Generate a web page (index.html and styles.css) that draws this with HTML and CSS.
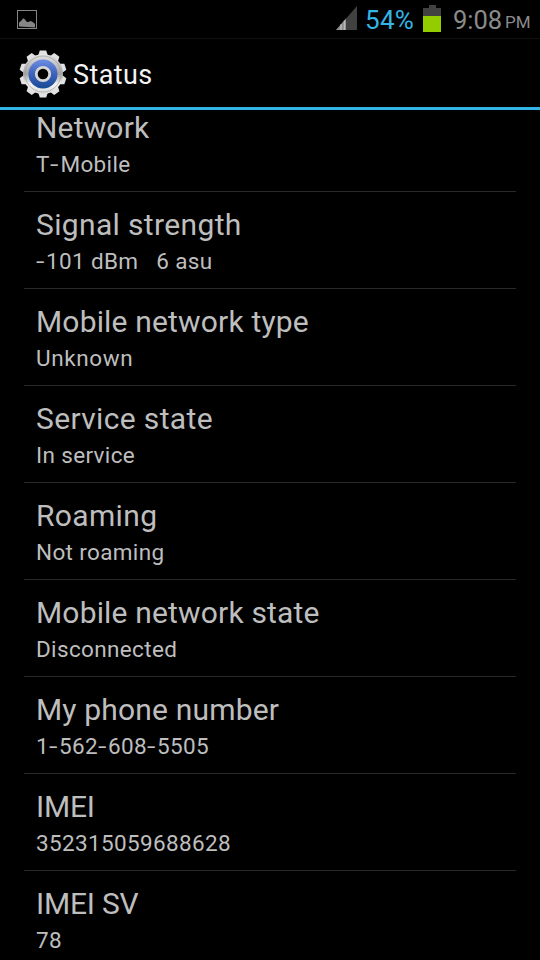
FILE: index.html
```html
<!DOCTYPE html>
<html lang="en">
<head>
    <meta charset="UTF-8">
    <meta name="viewport" content="width=device-width, initial-scale=1.0">
    <title>Status</title>
    <link rel="stylesheet" href="styles.css">
</head>
<body>
    <div class="screen">
        <div class="status-bar">
            <svg class="picture-icon" width="20" height="19" viewBox="0 0 20 19">
                <rect x="0.5" y="0.5" width="19" height="18" fill="none" stroke="#858585"/>
                <path d="M2 16.500v-4l2-1.500 2-2.500h1l3 3.500h1l3-1 3 2 1 1v3.500z" fill="#858585"/>
            </svg>
            <div class="indicators">
                <svg class="signal-icon" width="21" height="24" viewBox="0 0 21 24">
                    <path d="M0 24L21 0v24z" fill="#414141"/>
                    <path d="M0 24L10 12.500V24z" fill="#8d8d8d"/>
                    <path d="M5 18.300v5.700M8.500 14.500v9.500" stroke="#b9b9b9" stroke-width="1.500"/>
                </svg>
                <span class="percent">54%</span>
                <svg class="battery-icon" width="18" height="27" viewBox="0 0 18 27">
                    <path d="M6 0h7v3h5v8H0V3h6z" fill="#414141"/>
                    <rect y="11" width="18" height="16" fill="#93cd00"/>
                </svg>
                <span class="clock">9:08</span>
                <span class="ampm">PM</span>
            </div>
        </div>

        <div class="header">
            <svg class="gear-icon" width="48" height="48" viewBox="-24 -24 48 48">
                <defs>
                    <linearGradient id="metal" x1="0" y1="0" x2="0" y2="1">
                        <stop offset="0" stop-color="#e6e6e6"/>
                        <stop offset="0.5" stop-color="#a3a3a3"/>
                        <stop offset="0.75" stop-color="#f2f2f2"/>
                        <stop offset="1" stop-color="#dcdcdc"/>
                    </linearGradient>
                    <linearGradient id="blue" x1="0" y1="0" x2="0" y2="1">
                        <stop offset="0" stop-color="#6e8ee4"/>
                        <stop offset="0.5" stop-color="#3f62bc"/>
                        <stop offset="1" stop-color="#174a96"/>
                    </linearGradient>
                    <path id="tooth" d="M-5-18L-3.200-23.500H3.200L5-18z"/>
                </defs>
                <g fill="#e2e2e2">
                    <use href="#tooth"/>
                    <use href="#tooth" transform="rotate(36)"/>
                    <use href="#tooth" transform="rotate(72)"/>
                    <use href="#tooth" transform="rotate(108)"/>
                    <use href="#tooth" transform="rotate(144)"/>
                    <use href="#tooth" transform="rotate(180)"/>
                    <use href="#tooth" transform="rotate(216)"/>
                    <use href="#tooth" transform="rotate(252)"/>
                    <use href="#tooth" transform="rotate(288)"/>
                    <use href="#tooth" transform="rotate(324)"/>
                </g>
                <circle r="20" fill="url(#metal)"/>
                <circle r="18" fill="none" stroke="#a0a0a0" stroke-width="0.700"/>
                <circle r="14.500" fill="url(#blue)"/>
                <circle r="6.700" fill="#000" stroke="#d5d5d5" stroke-width="2.800"/>
            </svg>
            <h1>Status</h1>
        </div>

        <div class="list">
            <div class="item">
                <div class="title">Network</div>
                <div class="summary"><span class="wide-t">T</span><span class="dash">-</span>Mobile</div>
            </div>
            <div class="item">
                <div class="title loose">Signal strength</div>
                <div class="summary"><span class="dash">-</span>101 dBm   6 asu</div>
            </div>
            <div class="item">
                <div class="title">Mobile network type</div>
                <div class="summary loose">Unknown</div>
            </div>
            <div class="item">
                <div class="title loose">Service state</div>
                <div class="summary">In service</div>
            </div>
            <div class="item">
                <div class="title loose">Roaming</div>
                <div class="summary">Not roaming</div>
            </div>
            <div class="item">
                <div class="title">Mobile network state</div>
                <div class="summary">Disconnected</div>
            </div>
            <div class="item">
                <div class="title">My phone number</div>
                <div class="summary">1<span class="dash">-</span>562<span class="dash">-</span>608<span class="dash">-</span>5505</div>
            </div>
            <div class="item">
                <div class="title tight">IMEI</div>
                <div class="summary">352315059688628</div>
            </div>
            <div class="item">
                <div class="title tight">IMEI SV</div>
                <div class="summary">78</div>
            </div>
        </div>
    </div>
</body>
</html>
```

FILE: styles.css
```css
:root {
    --holo: #33b5e5;
    --text: #bebebe;
    --divider: #292929;
}

* {
    box-sizing: border-box;
    margin: 0;
    padding: 0;
}

body {
    font-family: Roboto, sans-serif;
    background: #000;
    color: var(--text);
}

svg {
    display: block;
    flex: none;
}

.screen {
    width: 540px;
    height: 960px;
    display: flex;
    flex-direction: column;
    overflow: hidden;
}

.status-bar {
    flex: none;
    height: 39px;
    display: flex;
    justify-content: space-between;
    align-items: flex-start;
    padding: 0 9px 0 17px;
    border-bottom: 1px solid #101010;
}

.picture-icon {
    margin-top: 10px;
}

.indicators {
    display: flex;
    line-height: 30px;
    white-space: nowrap;
}

.signal-icon {
    margin: 6px 8px 0 0;
}

.percent {
    width: 49px;
    margin-top: 5px;
    font-size: 26px;
    letter-spacing: 0.3px;
    color: var(--holo);
}

.battery-icon {
    margin: 5px 12px 0 9px;
}

.clock {
    width: 48px;
    margin-top: 5px;
    font-size: 25.5px;
    color: #8b8b8b;
}

.ampm {
    width: 26px;
    margin: 7px 0 0 4px;
    font-size: 17px;
    color: #8b8b8b;
}

.header {
    flex: none;
    height: 71px;
    display: flex;
    align-items: center;
    padding: 1px 19px 0;
    border-bottom: 3px solid var(--holo);
}

.header h1 {
    margin-left: 6px;
    padding-top: 2px;
    font-size: 27px;
    font-weight: 400;
    letter-spacing: 0.4px;
    color: #f3f3f3;
}

.list {
    flex: 1;
    min-height: 0;
    overflow: hidden;
    padding: 0 24px;
}

.item {
    height: 97px;
    padding: 15px 12px 0;
    border-bottom: 1px solid var(--divider);
}

/* list is scrolled a little under the header */
.item:first-child {
    margin-top: -15px;
}

.title {
    font-size: 30px;
    line-height: 36px;
    letter-spacing: 0.17px;
}

.title.loose {
    letter-spacing: 0.35px;
}

.title.tight {
    letter-spacing: -0.2px;
}

.summary {
    margin-top: 3px;
    font-size: 22.5px;
    line-height: 30px;
    letter-spacing: 0.35px;
    white-space: pre;
}

.summary.loose {
    letter-spacing: 0.6px;
}

.dash {
    display: inline-block;
    width: 10px;
    transform: scaleX(1.35);
    transform-origin: left;
}

.wide-t {
    letter-spacing: 1px;
}
```
